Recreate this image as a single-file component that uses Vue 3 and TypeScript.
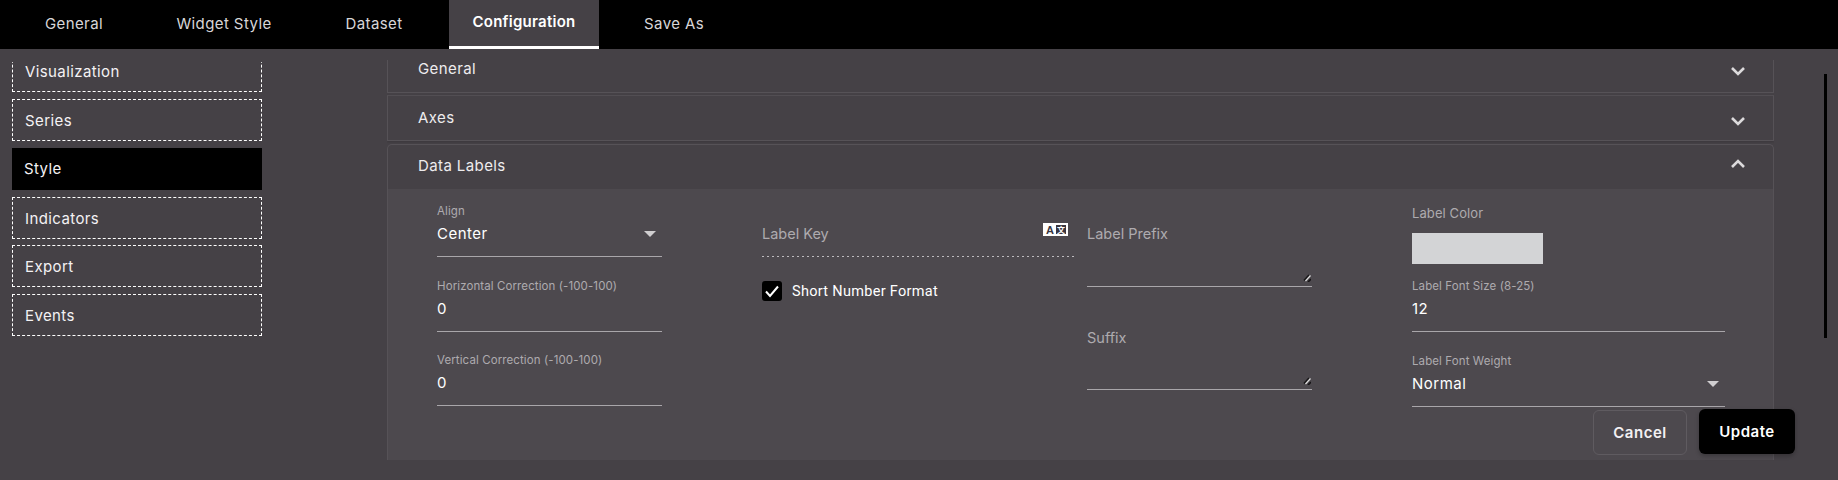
<script setup lang="ts">
const tabs: string[] = ['General', 'Widget Style', 'Dataset', 'Configuration', 'Save As']
const sideItems: string[] = ['Visualization', 'Series', 'Style', 'Indicators', 'Export', 'Events']
</script>

<template>
  <div class="root">
    <nav class="tabs">
      <div v-for="t in tabs" :key="t" class="tab" :class="{ active: t === 'Configuration' }">{{ t }}</div>
    </nav>
    <main class="main">
      <aside class="side">
        <div class="side-list">
          <div v-for="s in sideItems" :key="s" class="side-item" :class="{ on: s === 'Style' }">{{ s }}</div>
        </div>
      </aside>
      <section class="acc">
        <div class="acc-inner">
          <div class="panel p-general">
            <span>General</span>
            <svg class="chev" width="16" height="10" viewBox="0 0 16 10"><path d="M2 2l6 6 6-6" /></svg>
          </div>
          <div class="panel p-axes">
            <span>Axes</span>
            <svg class="chev" width="16" height="10" viewBox="0 0 16 10"><path d="M2 2l6 6 6-6" /></svg>
          </div>
          <div class="panel p-data">
            <div class="data-head">
              <span>Data Labels</span>
              <svg class="chev up" width="16" height="10" viewBox="0 0 16 10"><path d="M2 8l6-6 6 6" /></svg>
            </div>
            <div class="data-body">
              <div class="col c1">
                <div class="field">
                  <label>Align</label>
                  <div class="val">Center<i class="tri"></i></div>
                </div>
                <div class="field">
                  <label>Horizontal Correction (-100-100)</label>
                  <div class="val">0</div>
                </div>
                <div class="field">
                  <label>Vertical Correction (-100-100)</label>
                  <div class="val">0</div>
                </div>
              </div>
              <div class="col c2">
                <div class="key">
                  <span>Label Key</span>
                  <svg class="trans" width="25" height="13" viewBox="0 0 25 13">
                    <rect width="25" height="13" fill="#fff" />
                    <rect x="13" y="2" width="10" height="9" fill="#3a3640" />
                    <text x="7" y="10.5" class="ta">A</text>
                    <text x="18" y="10" class="tb">文</text>
                  </svg>
                </div>
                <div class="check">
                  <span class="box">
                    <svg width="20" height="20" viewBox="0 0 20 20"><path d="M4 10.5l4 4.5 8-9.500" /></svg>
                  </span>
                  <span class="check-t">Short Number Format</span>
                </div>
              </div>
              <div class="col c3">
                <div class="area a1">
                  <span>Label Prefix</span>
                  <svg class="grip" width="8" height="8" viewBox="0 0 8 8"><path class="g2" d="M1 6.500l5-5.500" /><path class="g1" d="M2.500 7l5-5.500" /><path class="g2" d="M5 8l3-3" /></svg>
                </div>
                <div class="area a2">
                  <span>Suffix</span>
                  <svg class="grip" width="8" height="8" viewBox="0 0 8 8"><path class="g2" d="M1 6.500l5-5.500" /><path class="g1" d="M2.500 7l5-5.500" /><path class="g2" d="M5 8l3-3" /></svg>
                </div>
              </div>
              <div class="col c4">
                <div class="field color">
                  <label>Label Color</label>
                  <div class="swatch"></div>
                </div>
                <div class="field">
                  <label>Label Font Size (8-25)</label>
                  <div class="val">12</div>
                </div>
                <div class="field">
                  <label>Label Font Weight</label>
                  <div class="val">Normal<i class="tri"></i></div>
                </div>
              </div>
            </div>
          </div>
        </div>
      </section>
      <div class="track"><div class="thumb"></div></div>
    </main>
    <div class="actions">
      <button class="btn cancel">Cancel</button>
      <button class="btn update">Update</button>
    </div>
  </div>
</template>

<style scoped>
.root {
  position: relative;
  width: 1838px;
  height: 480px;
  overflow: hidden;
  background: #454146;
  color: #fff;
  font-family: Inter, "Noto Sans", sans-serif;
}
.tabs {
  display: flex;
  height: 49px;
  background: #000;
}
.tab {
  width: 150px;
  height: 49px;
  box-sizing: border-box;
  text-align: center;
  line-height: 48px;
  font-size: 15px;
  letter-spacing: 0.4px;
  color: #d8d6d8;
}
.tab:first-child { margin-left: -1px; }
.tab.active {
  background: #454146;
  border-bottom: 3px solid #fff;
  color: #fff;
  font-weight: 600;
  line-height: 44px;
  letter-spacing: 0.25px;
}
.main {
  display: flex;
  height: 431px;
  padding-top: 13px;
  box-sizing: border-box;
}
.side {
  width: 250px;
  margin-left: 12px;
  height: 398px;
  overflow: hidden;
  flex: none;
}
.side-list {
  margin-top: -11.75px;
  display: flex;
  flex-direction: column;
  gap: 6.75px;
}
.side-item {
  height: 42px;
  box-sizing: border-box;
  border: 1px dashed #fff;
  line-height: 41px;
  padding-left: 12px;
  font-size: 15px;
  letter-spacing: 0.4px;
  color: #f4f2f4;
}
.side-item.on {
  background: #000;
  border-color: #000;
  padding-left: 11px;
  line-height: 40px;
}
.acc {
  width: 1387px;
  margin-left: 125px;
  margin-top: -2px;
  height: 400px;
  overflow: hidden;
  flex: none;
}
.acc-inner {
  margin-top: -14px;
  display: flex;
  flex-direction: column;
}
.panel {
  box-sizing: border-box;
  border: 1px solid #565257;
  font-size: 15px;
  letter-spacing: 0.4px;
  line-height: 14px;
  color: #eeecee;
}
.p-general, .p-axes {
  display: flex;
  align-items: center;
  justify-content: space-between;
  padding: 0 27px 2px 30px;
  border-top-color: #524e53;
}
.p-general { height: 47px; margin-bottom: 2px; }
.p-axes {
  height: 46px;
  margin-bottom: 3px;
  padding-bottom: 0;
  box-shadow: 0 1px 2px rgba(0,0,0,.15);
}
.p-data { border-radius: 5px 5px 0 0; border-bottom: 0; }
.data-head {
  height: 44px;
  display: flex;
  align-items: center;
  justify-content: space-between;
  padding: 0 27px 3px 30px;
  box-sizing: border-box;
}
.chev path {
  fill: none;
  stroke: #dcdadc;
  stroke-width: 2.6;
}
.p-general .chev { margin-top: 4px; }
.p-axes .chev { margin-top: 6px; }
.chev.up { margin-top: -3px; }
.data-body {
  background: #4d494e;
  height: 271px;
  box-sizing: border-box;
  padding: 14px 0 0 49px;
  display: flex;
  letter-spacing: 0;
}
.col { display: flex; flex-direction: column; flex: none; }
.c1 { width: 225px; }
.c2 { width: 312px; margin-left: 100px; }
.c3 { width: 225px; margin-left: 13px; }
.c4 { width: 313px; margin-left: 100px; }
.field {
  box-sizing: border-box;
  height: 54px;
  border-bottom: 1px solid #a9a6aa;
  margin-bottom: 20.5px;
}
.field label {
  display: block;
  height: 16px;
  line-height: 16px;
  font-size: 11.5px;
  letter-spacing: 0.1px;
  color: #aeabaf;
  margin-bottom: 2px;
}
.val {
  position: relative;
  height: 24px;
  line-height: 25px;
  font-size: 15px;
  letter-spacing: 0.5px;
  color: #fff;
}
.tri {
  position: absolute;
  right: 6px;
  top: 10px;
  width: 0;
  height: 0;
  border-left: 6px solid transparent;
  border-right: 6px solid transparent;
  border-top: 6px solid #d0ced0;
}
.field.color {
  border-bottom: 0;
  height: 75px;
  margin-bottom: 0;
}
.field.color label {
  font-size: 13px;
  padding-top: 2px;
}
.swatch {
  width: 131px;
  height: 31px;
  margin-top: 12px;
  background: #d3d4d6;
}
.key {
  position: relative;
  margin-top: 14px;
  padding-top: 7px;
  box-sizing: border-box;
  line-height: 20px;
  font-size: 14.5px;
  color: #aeabaf;
  height: 40px;
  background: repeating-linear-gradient(90deg, #bdbabe 0 2px, transparent 2px 5px) left bottom / 100% 1px no-repeat;
}
.trans {
  position: absolute;
  right: 6px;
  top: 6px;
}
.ta {
  font: 700 11px "Liberation Sans", sans-serif;
  fill: #3a3640;
  text-anchor: middle;
}
.tb {
  font: 700 8px "Noto Sans CJK SC", sans-serif;
  fill: #fff;
  text-anchor: middle;
}
.check {
  display: flex;
  align-items: center;
  margin-top: 24px;
  height: 20px;
}
.box {
  width: 20px;
  height: 20px;
  border-radius: 3px;
  background: #000;
  flex: none;
}
.box svg { display: block; }
.box path {
  fill: none;
  stroke: #fff;
  stroke-width: 2;
}
.check-t {
  margin-left: 10px;
  font: 14.5px Roboto, sans-serif;
  letter-spacing: 0.3px;
  color: #fff;
}
.area {
  position: relative;
  box-sizing: border-box;
  border-bottom: 1px solid #a9a6aa;
  font-size: 14.5px;
  line-height: 20px;
  color: #aeabaf;
}
.a1 { height: 74px; margin-top: 10px; padding-top: 11px; }
.a2 { height: 62px; margin-top: 41px; }
.grip {
  position: absolute;
  right: 1px;
  bottom: 4px;
}
.g1 { stroke: #ddd; stroke-width: 1.2; fill: none; }
.g2 { stroke: #161416; stroke-width: 1.6; fill: none; }
.track {
  margin-left: 50px;
  margin-top: 12px;
  flex: none;
}
.thumb {
  width: 3px;
  height: 264px;
  background: #000;
}
.actions {
  position: absolute;
  left: 1593px;
  top: 409px;
  display: flex;
  gap: 12px;
  align-items: flex-start;
}
.btn {
  font-family: inherit;
  font-size: 15px;
  letter-spacing: 0.5px;
  font-weight: 600;
  border-radius: 6px;
  color: #fff;
  padding: 0;
}
.cancel {
  width: 94px;
  height: 45px;
  margin-top: 1px;
  background: transparent;
  border: 1px solid #5f5b60;
  color: #f2f0f2;
}
.update {
  width: 96px;
  height: 45px;
  background: #000;
  border: 0;
  box-shadow: 0 2px 4px rgba(0,0,0,.25);
}
</style>

<style>
html, body { background: #454146; }
</style>
